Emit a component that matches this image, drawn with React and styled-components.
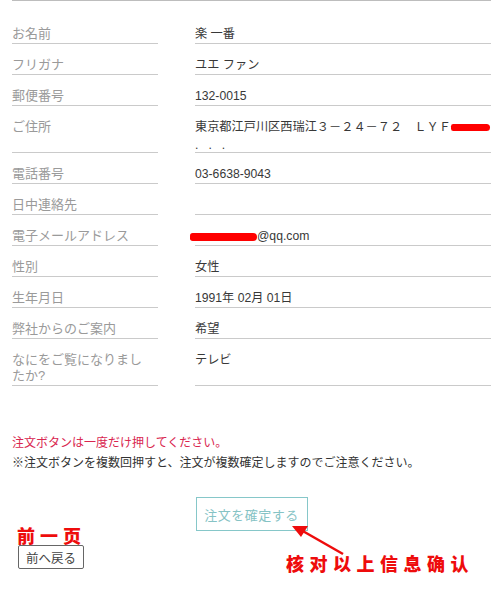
import React from "react";
import styled, { createGlobalStyle } from "styled-components";

const GlobalStyle = createGlobalStyle`
  body {
    margin: 0;
    background: #fff;
    font-family: "Liberation Sans", "Noto Sans CJK JP", sans-serif;
  }
`;

const Page = styled.div`
  position: relative;
  height: 589px;
  padding: 0 6px 0 12px;
  overflow: hidden;
`;

const TopRule = styled.div`
  border-top: 1px solid #bdbdbd;
`;

const Table = styled.div`
  margin-top: 12px;
`;

const Row = styled.div`
  display: grid;
  grid-template-columns: 146px 296px;
  column-gap: 37px;
`;

const Cell = styled.div`
  padding: 13px 0 1px;
  line-height: 16px;
  border-bottom: 1px solid #cacaca;
  min-height: 16px;
`;

const Label = styled(Cell)`
  font-size: 13px;
  color: #9a9a9a;
`;

const Value = styled(Cell)`
  font-size: 12.2px;
  color: #383838;
`;

const Line = styled.span`
  display: block;
  white-space: nowrap;
  letter-spacing: ${props => props.spacing || 0}px;
  padding-top: ${props => props.drop || 0}px;
  margin-bottom: ${props => -(props.drop || 0)}px;
`;

const Redact = styled.span`
  display: inline-block;
  width: ${props => props.width}px;
  height: ${props => props.height}px;
  margin-left: ${props => props.offset || 0}px;
  background: #f00;
  border-radius: 4px 6px 6px 4px;
  vertical-align: ${props => props.lift}px;
`;

const Notes = styled.div`
  margin-top: 47px;
  font-size: 12px;
  line-height: 20px;
`;

const Note = styled.p`
  margin: 0;
  color: ${props => (props.warn ? "#d9264f" : "#333")};
`;

const Center = styled.div`
  display: flex;
  justify-content: center;
  margin-top: 24px;
`;

const ConfirmButton = styled.button`
  width: 112px;
  height: 34px;
  padding: 0;
  background: #fff;
  border: 1px solid #86c7c9;
  color: #86c3c5;
  font-family: inherit;
  font-size: 13px;
  letter-spacing: 0.5px;
`;

const BackButton = styled.button`
  display: block;
  margin: 14px 0 0 6px;
  width: 66px;
  height: 24px;
  padding: 0;
  background: #fff;
  border: 1px solid #666;
  border-radius: 2px;
  color: #444;
  font-family: inherit;
  font-size: 12.5px;
`;

const Scribble = styled.div`
  position: absolute;
  left: ${props => props.x}px;
  top: ${props => props.y}px;
  color: #ee0c0c;
  font-family: "Noto Sans CJK SC", sans-serif;
  font-weight: 900;
  font-size: 18px;
  line-height: 18px;
  letter-spacing: ${props => props.spacing}px;
  white-space: nowrap;
`;

const Arrow = styled.svg`
  position: absolute;
  left: 286px;
  top: 520px;
`;

const rows = [
  ["お名前", "楽 一番"],
  ["フリガナ", "ユエ ファン"],
  ["郵便番号", "132-0015"],
  [
    "ご住所",
    <>
      <Line>
        東京都江戸川区西瑞江３－２４－７２　ＬＹＦ
        <Redact width={39} height={7} lift={0} />
      </Line>
      <Line spacing={10} drop={2}>...</Line>
    </>,
  ],
  ["電話番号", "03-6638-9043"],
  ["日中連絡先", ""],
  [
    "電子メールアドレス",
    <>
      <Redact width={67} height={8} offset={-5} lift={-1} />
      @qq.com
    </>,
  ],
  ["性別", "女性"],
  ["生年月日", "1991年 02月 01日"],
  ["弊社からのご案内", "希望"],
  [
    <>
      なにをご覧になりまし
      <br />
      たか?
    </>,
    "テレビ",
  ],
];

const App = () => (
  <Page>
    <GlobalStyle />
    <TopRule />
    <Table>
      {rows.map(([label, value], i) => (
        <Row key={i}>
          <Label>{label}</Label>
          <Value>{value}</Value>
        </Row>
      ))}
    </Table>
    <Notes>
      <Note warn>注文ボタンは一度だけ押してください。</Note>
      <Note>※注文ボタンを複数回押すと、注文が複数確定しますのでご注意ください。</Note>
    </Notes>
    <Center>
      <ConfirmButton>注文を確定する</ConfirmButton>
    </Center>
    <BackButton>前へ戻る</BackButton>

    <Scribble x={17} y={526} spacing={5}>
      前一页
    </Scribble>
    <Scribble x={286} y={554} spacing={5.5}>
      核对以上信息确认
    </Scribble>
    <Arrow width="70" height="40" viewBox="0 0 70 40">
      <line x1="57" y1="34" x2="15" y2="10" stroke="#ee0c0c" strokeWidth="2.5" />
      <polygon points="6,6 22,6 15,17" fill="#ee0c0c" />
    </Arrow>
  </Page>
);

export default App;
